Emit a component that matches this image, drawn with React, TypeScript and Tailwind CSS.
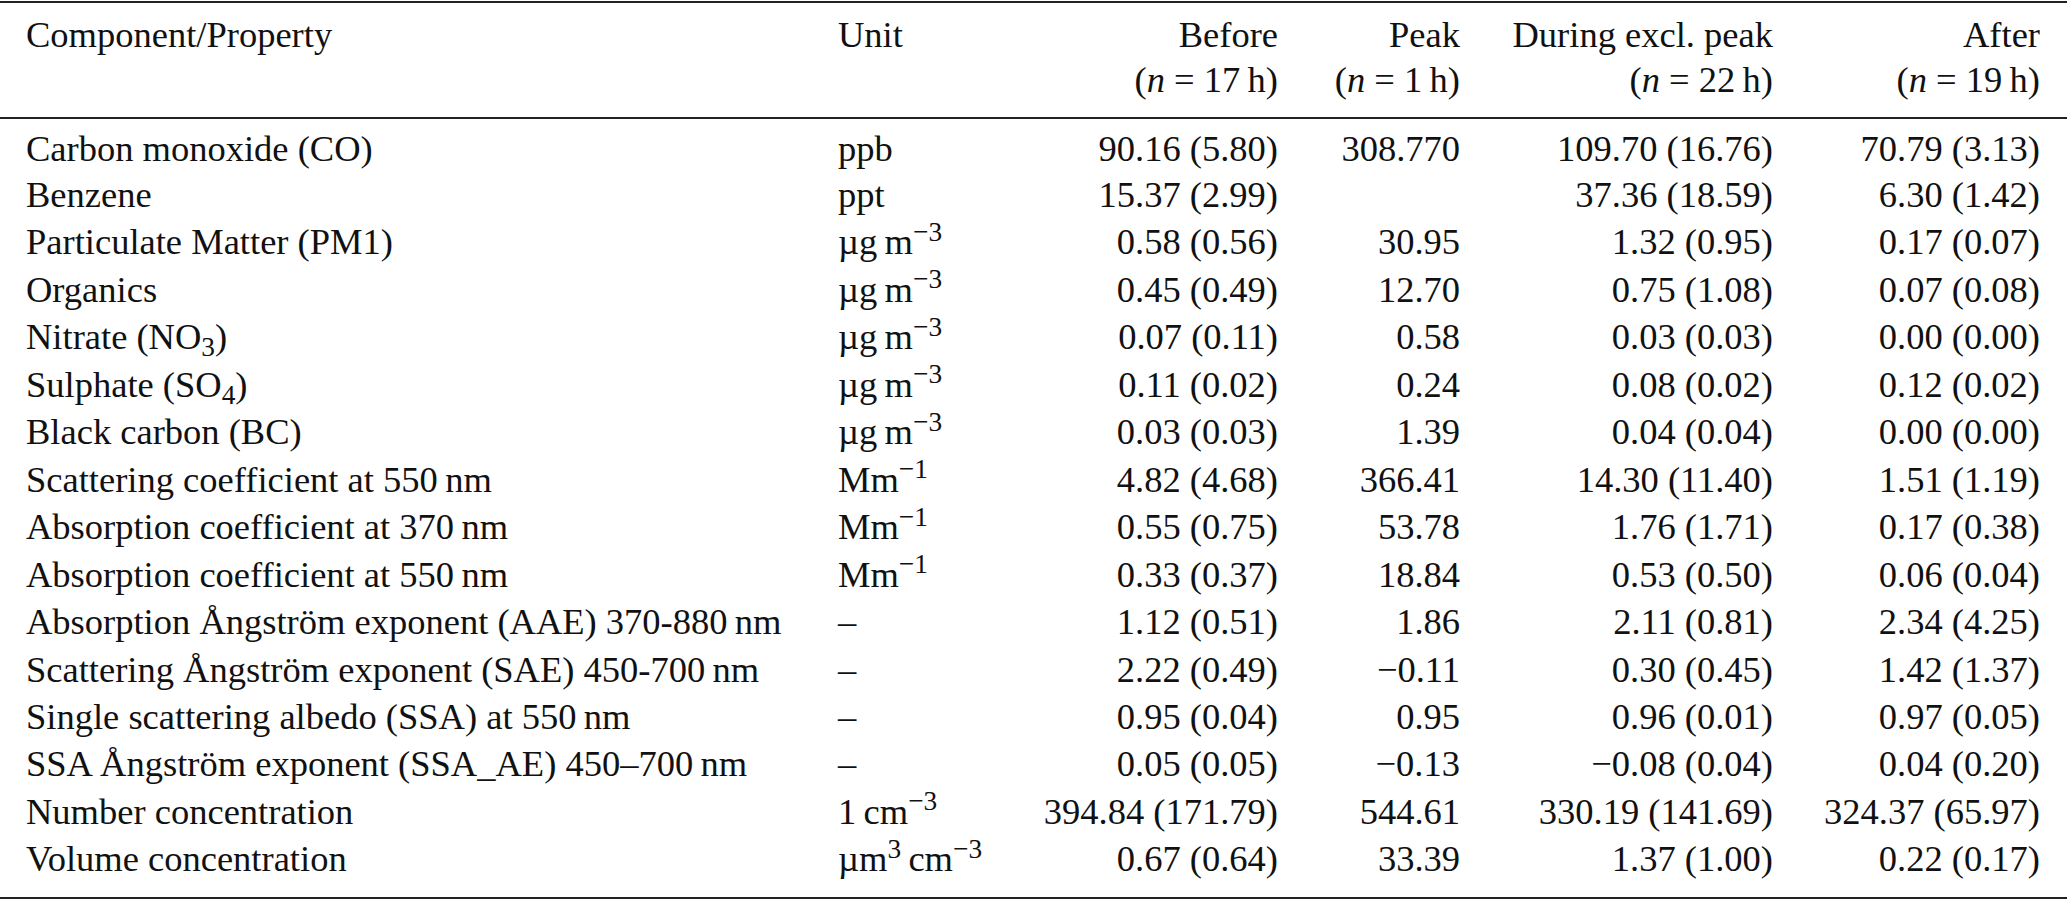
import type { ReactNode } from 'react';

const THIN = '\u2009';
const MINUS = '\u2212';

const mass = (
  <>
    µg{THIN}m<sup>{MINUS}3</sup>
  </>
);
const inv = (
  <>
    Mm<sup>{MINUS}1</sup>
  </>
);

type Row = {
  name: ReactNode;
  unit: ReactNode;
  before: string;
  peak: string;
  during: string;
  after: string;
  h: string;
};

const rows: Row[] = [
  { name: 'Carbon monoxide (CO)', unit: 'ppb', before: '90.16 (5.80)', peak: '308.770', during: '109.70 (16.76)', after: '70.79 (3.13)', h: 'h-[45px]' },
  { name: 'Benzene', unit: 'ppt', before: '15.37 (2.99)', peak: '', during: '37.36 (18.59)', after: '6.30 (1.42)', h: 'h-[47px]' },
  { name: 'Particulate Matter (PM1)', unit: mass, before: '0.58 (0.56)', peak: '30.95', during: '1.32 (0.95)', after: '0.17 (0.07)', h: 'h-[47.46px]' },
  { name: 'Organics', unit: mass, before: '0.45 (0.49)', peak: '12.70', during: '0.75 (1.08)', after: '0.07 (0.08)', h: 'h-[47.46px]' },
  {
    name: (
      <>
        Nitrate (NO<sub>3</sub>)
      </>
    ),
    unit: mass,
    before: '0.07 (0.11)',
    peak: '0.58',
    during: '0.03 (0.03)',
    after: '0.00 (0.00)',
    h: 'h-[47.46px]',
  },
  {
    name: (
      <>
        Sulphate (SO<sub>4</sub>)
      </>
    ),
    unit: mass,
    before: '0.11 (0.02)',
    peak: '0.24',
    during: '0.08 (0.02)',
    after: '0.12 (0.02)',
    h: 'h-[47.46px]',
  },
  { name: 'Black carbon (BC)', unit: mass, before: '0.03 (0.03)', peak: '1.39', during: '0.04 (0.04)', after: '0.00 (0.00)', h: 'h-[47.46px]' },
  { name: `Scattering coefficient at 550${THIN}nm`, unit: inv, before: '4.82 (4.68)', peak: '366.41', during: '14.30 (11.40)', after: '1.51 (1.19)', h: 'h-[47.46px]' },
  { name: `Absorption coefficient at 370${THIN}nm`, unit: inv, before: '0.55 (0.75)', peak: '53.78', during: '1.76 (1.71)', after: '0.17 (0.38)', h: 'h-[47.46px]' },
  { name: `Absorption coefficient at 550${THIN}nm`, unit: inv, before: '0.33 (0.37)', peak: '18.84', during: '0.53 (0.50)', after: '0.06 (0.04)', h: 'h-[47.46px]' },
  { name: `Absorption Ångström exponent (AAE) 370-880${THIN}nm`, unit: '–', before: '1.12 (0.51)', peak: '1.86', during: '2.11 (0.81)', after: '2.34 (4.25)', h: 'h-[47.46px]' },
  { name: `Scattering Ångström exponent (SAE) 450-700${THIN}nm`, unit: '–', before: '2.22 (0.49)', peak: `${MINUS}0.11`, during: '0.30 (0.45)', after: '1.42 (1.37)', h: 'h-[47.46px]' },
  { name: `Single scattering albedo (SSA) at 550${THIN}nm`, unit: '–', before: '0.95 (0.04)', peak: '0.95', during: '0.96 (0.01)', after: '0.97 (0.05)', h: 'h-[47.46px]' },
  { name: `SSA Ångström exponent (SSA_AE) 450–700${THIN}nm`, unit: '–', before: '0.05 (0.05)', peak: `${MINUS}0.13`, during: `${MINUS}0.08 (0.04)`, after: '0.04 (0.20)', h: 'h-[47.46px]' },
  {
    name: 'Number concentration',
    unit: (
      <>
        1{THIN}cm<sup>{MINUS}3</sup>
      </>
    ),
    before: '394.84 (171.79)',
    peak: '544.61',
    during: '330.19 (141.69)',
    after: '324.37 (65.97)',
    h: 'h-[47.46px]',
  },
  {
    name: 'Volume concentration',
    unit: (
      <>
        µm<sup>3</sup>
        {THIN}cm<sup>{MINUS}3</sup>
      </>
    ),
    before: '0.67 (0.64)',
    peak: '33.39',
    during: '1.37 (1.00)',
    after: '0.22 (0.17)',
    h: 'h-[47.46px]',
  },
];

const grid = 'grid grid-cols-[812px_200px_240px_182px_313px_267px] items-center';

function Count({ n }: { n: string }) {
  return (
    <>
      (<i>n</i> = {n}
      {THIN}h)
    </>
  );
}

export default function App() {
  return (
    <div className="min-h-screen bg-white font-['Liberation_Serif','Times_New_Roman',serif] text-[36.5px] text-[#111]">
      <div className="mt-px border-t-2 border-[#222] pt-[9px]" />
      <div className="px-[26px] pr-[27px]">
        <div className={`${grid} h-[45px] leading-[45px] whitespace-nowrap`}>
          <div>Component/Property</div>
          <div>Unit</div>
          <div className="text-right">Before</div>
          <div className="text-right">Peak</div>
          <div className="text-right">During excl. peak</div>
          <div className="text-right">After</div>
        </div>
        <div className={`${grid} h-[45px] leading-[45px] whitespace-nowrap`}>
          <div />
          <div />
          <div className="text-right">
            <Count n="17" />
          </div>
          <div className="text-right">
            <Count n="1" />
          </div>
          <div className="text-right">
            <Count n="22" />
          </div>
          <div className="text-right">
            <Count n="19" />
          </div>
        </div>
      </div>
      <div className="mt-[15px] border-t-2 border-[#222] pt-[8px]">
        <div className="px-[26px] pr-[27px]">
          {rows.map((r, i) => (
            <div key={i} className={`${grid} ${r.h} whitespace-nowrap`}>
              <div className="leading-none">{r.name}</div>
              <div className="leading-none">{r.unit}</div>
              <div className="text-right leading-none">{r.before}</div>
              <div className="text-right leading-none">{r.peak}</div>
              <div className="text-right leading-none">{r.during}</div>
              <div className="text-right leading-none">{r.after}</div>
            </div>
          ))}
        </div>
        <div className="mt-[14px] border-t-2 border-[#222]" />
      </div>
    </div>
  );
}
